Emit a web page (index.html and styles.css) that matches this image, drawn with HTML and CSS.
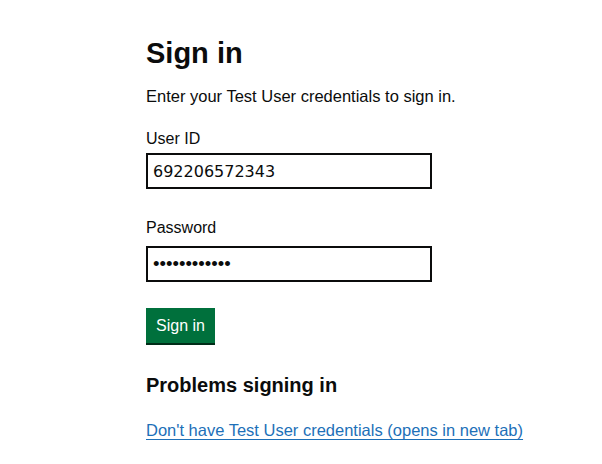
FILE: index.html
```html
<!DOCTYPE html>
<html lang="en">
<head>
<meta charset="utf-8">
<title>Sign in</title>
<link rel="stylesheet" href="styles.css">
</head>
<body>
<main class="page">
  <h1 class="title">Sign in</h1>
  <p class="lead">Enter your Test User credentials to sign in.</p>
  <form class="form">
    <div class="field">
      <label class="label" for="user-id">User ID</label>
      <input class="input" id="user-id" type="text" value="692206572343">
    </div>
    <div class="field field--password">
      <label class="label" for="password">Password</label>
      <input class="input input--password" id="password" type="password" value="abcdefghijkl">
    </div>
    <button class="button" type="button">Sign in</button>
  </form>
  <h2 class="subtitle">Problems signing in</h2>
  <p class="links"><a class="link" href="#">Don't have Test User credentials (opens in new tab)</a></p>
</main>
</body>
</html>
```
FILE: styles.css
```css
html, body {
  margin: 0;
  padding: 0;
  background: #ffffff;
}
body {
  font-family: "Liberation Sans", Arial, sans-serif;
  color: #0b0c0c;
}
.page {
  padding: 37px 0 0 146px;
}
.title {
  margin: 0 0 17px;
  font-size: 29px;
  line-height: 32px;
  font-weight: 700;
}
.lead {
  margin: 0 0 23px;
  font-size: 16.5px;
  line-height: 20px;
}
.form {
  display: flex;
  flex-direction: column;
  align-items: flex-start;
}
.field {
  display: flex;
  flex-direction: column;
  margin-bottom: 29px;
}
.label {
  font-size: 16px;
  line-height: 20px;
  margin-bottom: 4px;
}
.field--password .label {
  margin-bottom: 8px;
}
.input {
  box-sizing: border-box;
  width: 286px;
  height: 36px;
  margin: 0;
  padding: 0 5px;
  border: 2px solid #0b0c0c;
  border-radius: 0;
  font-family: "DejaVu Sans", sans-serif;
  font-size: 16px;
  color: #0b0c0c;
  background: #ffffff;
  outline: none;
}
.input--password {
  font-family: "Liberation Sans", Arial, sans-serif;
  font-size: 18.5px;
}
.button {
  margin: -3px 0 0;
  padding: 8px 8px 7px;
  border: 2px solid transparent;
  border-radius: 0;
  background: #00703c;
  box-shadow: 0 2px 0 #002d18;
  color: #ffffff;
  font-family: "Liberation Sans", Arial, sans-serif;
  font-size: 16px;
  line-height: 16px;
  cursor: pointer;
}
.subtitle {
  margin: 30px 0 23px;
  font-size: 20px;
  line-height: 24px;
  font-weight: 700;
}
.links {
  margin: 0;
  font-size: 16.5px;
  line-height: 20px;
}
.link {
  color: #1d70b8;
  text-decoration: underline;
  text-decoration-thickness: 1px;
  text-underline-offset: 3px;
}
```
